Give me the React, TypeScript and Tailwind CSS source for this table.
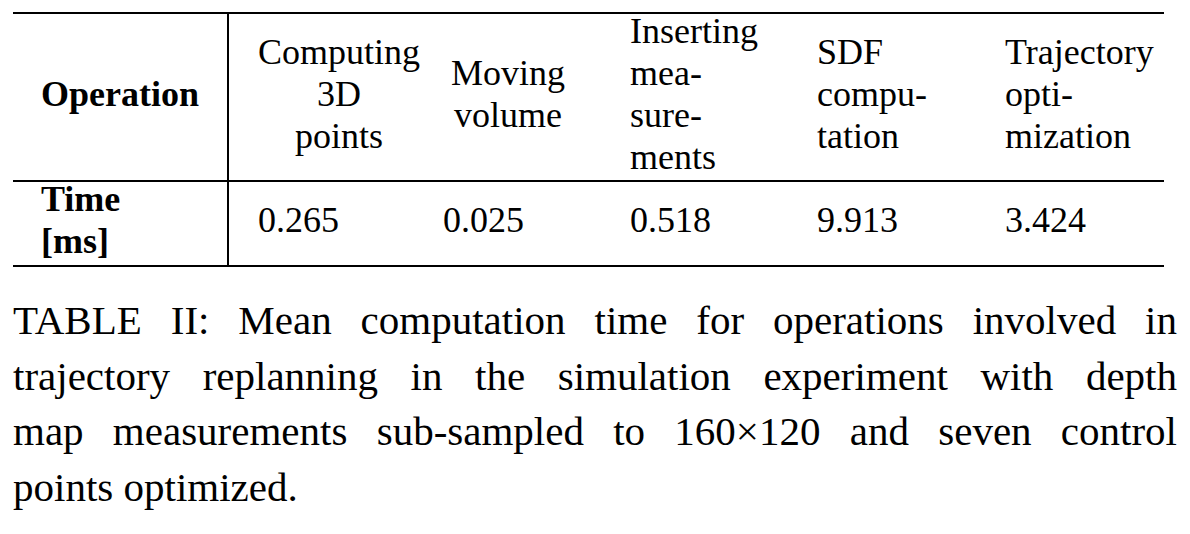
import React from 'react';

const serif = "font-[Liberation_Serif]";

const header = [
  { lines: ["Computing", "3D", "points"], box: "w-[162px] text-center" },
  { lines: ["Moving", "volume"], box: "w-[130px] text-center" },
  { lines: ["Inserting", "mea-", "sure-", "ments"], box: "" },
  { lines: ["SDF", "compu-", "tation"], box: "" },
  { lines: ["Trajectory", "opti-", "mization"], box: "" },
];

const times = ["0.265", "0.025", "0.518", "9.913", "3.424"];

const colPad = ["pl-[29px]", "", "", "", ""];

const caption = [
  "TABLE II: Mean computation time for operations involved in",
  "trajectory replanning in the simulation experiment with depth",
  "map measurements sub-sampled to 160\u00d7120 and seven control",
];

export default function App() {
  return (
    <div
      className="w-[1190px] h-[534px] bg-white text-black font-serif"
      style={{ fontFamily: '"Liberation Serif", "Times New Roman", serif' }}
    >
      {/* Table */}
      <div className="pt-[12px] pl-[13px]">
        <div className="w-[1151px] border-t-2 border-b-2 border-black text-[36px] leading-[42px]">
          <div className="grid grid-cols-[216px_214px_187px_187px_188px_159px] grid-rows-[166px]">
            <div className="flex items-center pl-[28px] pb-[7px] border-r-2 border-black font-bold">
              Operation
            </div>
            {header.map((h, i) => (
              <div key={i} className={`flex items-center pb-[7px] ${colPad[i]}`}>
                <div className={h.box}>
                  {h.lines.map((l) => (
                    <div key={l}>{l}</div>
                  ))}
                </div>
              </div>
            ))}
          </div>
          <div className="grid grid-cols-[216px_214px_187px_187px_188px_159px] grid-rows-[83px] border-t-2 border-black">
            <div className="flex items-center pl-[28px] pb-[7px] border-r-2 border-black font-bold">
              <div>
                <div>Time</div>
                <div>[ms]</div>
              </div>
            </div>
            {times.map((t, i) => (
              <div key={t} className={`flex items-center pb-[7px] ${colPad[i]}`}>
                {t}
              </div>
            ))}
          </div>
        </div>
      </div>

      {/* Caption */}
      <div className={`mt-[26px] pl-[13px] w-[1177px] text-[41px] leading-[55.5px] ${serif}`}>
        {caption.map((line) => (
          <div key={line} className="text-justify [text-align-last:justify] whitespace-nowrap">
            {line}
          </div>
        ))}
        <div>points optimized.</div>
      </div>
    </div>
  );
}
